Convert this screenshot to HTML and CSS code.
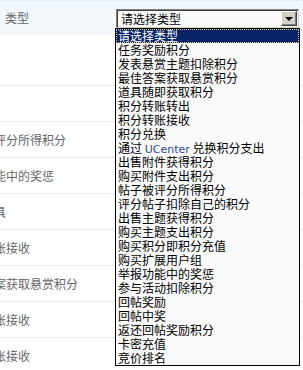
FILE: index.html
```html
<!DOCTYPE html>
<html lang="zh-CN">
<head>
<meta charset="utf-8">
<title>积分记录</title>
<link rel="stylesheet" href="styles.css">
</head>
<body>
<div class="page">
  <div class="row row-filter">
    <div class="label">类型</div>
    <div class="select">
      <span class="select-text">请选择类型</span>
      <span class="select-btn"><span class="arrow"></span></span>
    </div>
  </div>
  <div class="row row-tall"></div>
  <div class="row"><span class="name">回帖</span></div>
  <div class="row"><span class="name">帖子被评分所得积分</span></div>
  <div class="row"><span class="name">举报功能中的奖惩</span></div>
  <div class="row"><span class="name">使用道具</span></div>
  <div class="row"><span class="name">积分转账接收</span></div>
  <div class="row"><span class="name">最佳答案获取悬赏积分</span></div>
  <div class="row"><span class="name">积分转账接收</span></div>
  <div class="row"><span class="name">积分转账接收</span></div>

  <ul class="listbox">
    <li class="opt selected">请选择类型</li>
    <li class="opt">任务奖励积分</li>
    <li class="opt">发表悬赏主题扣除积分</li>
    <li class="opt">最佳答案获取悬赏积分</li>
    <li class="opt">道具随即获取积分</li>
    <li class="opt">积分转账转出</li>
    <li class="opt">积分转账接收</li>
    <li class="opt">积分兑换</li>
    <li class="opt">通过 <span class="latin">UCenter</span> 兑换积分支出</li>
    <li class="opt">出售附件获得积分</li>
    <li class="opt">购买附件支出积分</li>
    <li class="opt">帖子被评分所得积分</li>
    <li class="opt">评分帖子扣除自己的积分</li>
    <li class="opt">出售主题获得积分</li>
    <li class="opt">购买主题支出积分</li>
    <li class="opt">购买积分即积分充值</li>
    <li class="opt">购买扩展用户组</li>
    <li class="opt">举报功能中的奖惩</li>
    <li class="opt">参与活动扣除积分</li>
    <li class="opt">回帖奖励</li>
    <li class="opt">回帖中奖</li>
    <li class="opt">返还回帖奖励积分</li>
    <li class="opt">卡密充值</li>
    <li class="opt">竞价排名</li>
  </ul>
</div>
</body>
</html>
```

FILE: styles.css
```css
* { box-sizing: border-box; }
html, body {
  margin: 0;
  padding: 0;
  background: #fff;
}
body {
  font-family: "Noto Sans CJK SC", "Noto Sans", sans-serif;
  font-size: 12px;
  color: #666;
  width: 303px;
  height: 370px;
  overflow: hidden;
}
.page {
  position: relative;
  width: 303px;
  height: 370px;
  overflow: hidden;
}
.row {
  height: 36px;
  border-bottom: 1px dotted #cfe2f1;
  display: flex;
  align-items: center;
  white-space: nowrap;
  line-height: 14px;
}
.row-filter {
  height: 35px;
  border-top: 1px dotted #cfe2f1;
  border-bottom: none;
  background: #f1f7fb;
  align-items: flex-start;
  padding-top: 8px;
}
.row-tall {
  height: 51px;
}
.label {
  width: 116px;
  padding-left: 5px;
  padding-top: 2px;
  color: #666;
  font-size: 12px;
}
.name {
  margin-left: -42px;
  color: #666;
}
.select {
  width: 183px;
  height: 19px;
  display: flex;
  align-items: stretch;
  background: #fafafa;
  border-top: 1px solid #808080;
  border-left: 1px solid #808080;
  border-right: 1px solid #d4d0c8;
  border-bottom: 1px solid #d4d0c8;
  box-shadow: inset 1px 1px 0 #404040;
  padding: 1px 1px 1px 1px;
}
.select-text {
  flex: 1;
  color: #000;
  padding-left: 3px;
  line-height: 15px;
  font-size: 12px;
}
.select-btn {
  width: 16px;
  background: #d4d0c8;
  border-top: 1px solid #fff;
  border-left: 1px solid #fff;
  border-right: 1px solid #404040;
  border-bottom: 1px solid #404040;
  box-shadow: inset -1px -1px 0 #808080;
  display: flex;
  align-items: center;
  justify-content: center;
}
.arrow {
  width: 0;
  height: 0;
  border-left: 4px solid transparent;
  border-right: 4px solid transparent;
  border-top: 4px solid #000;
  margin-top: 1px;
}
.listbox {
  position: absolute;
  left: 115px;
  top: 28px;
  width: 185px;
  height: 338px;
  margin: 0;
  padding: 0;
  list-style: none;
  background: #fafafa;
  border: 1px solid #000;
}
.opt {
  height: 14px;
  line-height: 14px;
  padding-left: 2px;
  color: #000;
  white-space: nowrap;
  font-size: 12px;
}
.opt.selected {
  background: #0a246a;
  color: #fff;
  outline: 1px dotted #e8d070;
  outline-offset: -1px;
}
.latin {
  font-family: "DejaVu Sans", sans-serif;
  font-size: 11px;
  color: #2b4a9a;
}
```
